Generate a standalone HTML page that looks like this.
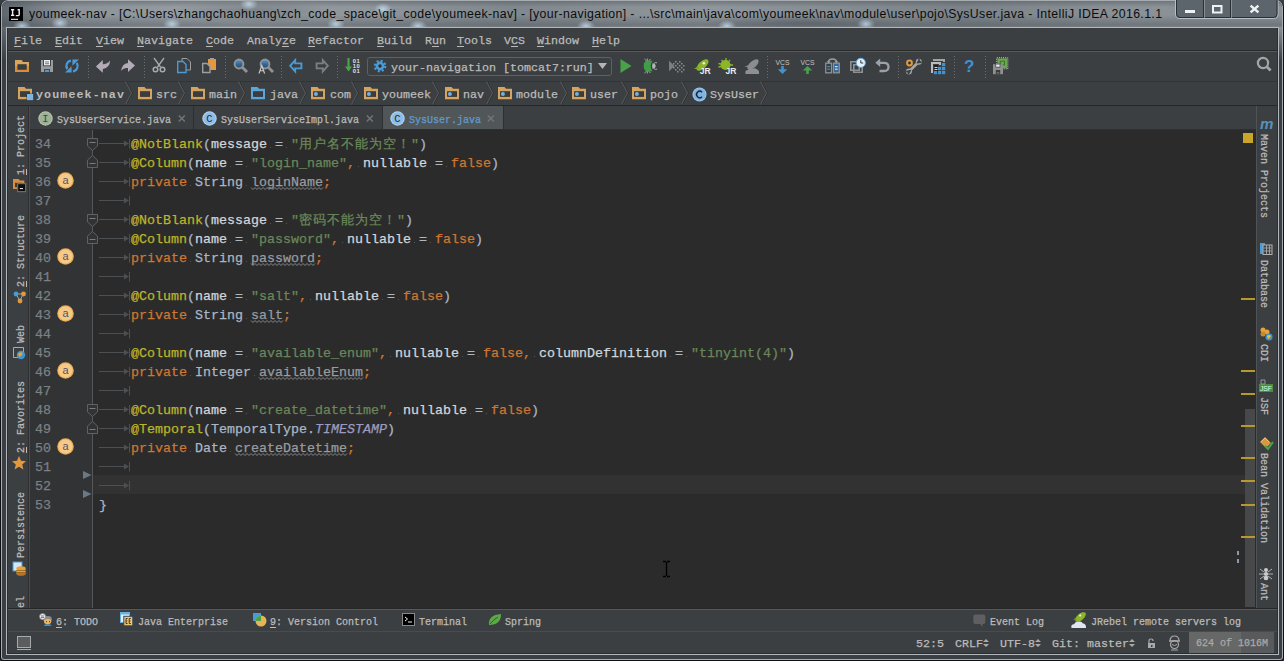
<!DOCTYPE html><html><head><meta charset="utf-8"><style>
*{margin:0;padding:0;box-sizing:border-box}
html,body{width:1284px;height:661px;overflow:hidden;background:#3a3f44}
body{position:relative;font-family:"Liberation Mono",monospace;color:#bbbbbb}
.code,.t,.ln{-webkit-text-stroke:0.25px currentColor}
.a{position:absolute}
.t{position:absolute;white-space:pre;line-height:1}
.m7{font-size:11.667px}
.m6{font-size:10px}
.m8{font-size:13.333px}
svg{position:absolute;overflow:visible}
.code{position:absolute;left:99px;font-size:13.333px;line-height:19px;white-space:pre;color:#a9b7c6}
.kw{color:#cc7832}
.an{color:#bbb529}
.st{color:#6a8759}
.nm{color:#d0d6de}
.fl{color:#979ca1}
.it{color:#9d9cc0;font-style:italic}
.cj{letter-spacing:1px}.ws{position:relative}.ws::after{content:'';position:absolute;left:3px;top:10px;width:1px;height:1px;background:#505254}
.ln{position:absolute;left:35px;width:16px;font-size:13.333px;line-height:19px;color:#7c8085;white-space:pre}
</style></head><body><div class="a" style="left:0;top:0;width:1284px;height:661px;border-radius:8px 8px 3px 3px;background:#0e1012"></div><div class="a" style="left:1px;top:0;width:1282px;height:660px;border-radius:7px 7px 3px 3px;background:#a7acb1"></div><div class="a" style="left:2px;top:1px;width:1280px;height:658px;border-radius:6px 6px 2px 2px;background:#3a3f46"></div><div class="a" style="left:2px;top:1px;width:1280px;height:60px;border-radius:6px 6px 0 0;background:
radial-gradient(ellipse 9px 6px at 20px 25px,rgba(205,230,250,.75),rgba(0,0,0,0)),
radial-gradient(ellipse 9px 6px at 58px 22px,rgba(205,230,250,.75),rgba(0,0,0,0)),
radial-gradient(ellipse 9px 6px at 170px 23px,rgba(205,230,250,.75),rgba(0,0,0,0)),
radial-gradient(ellipse 9px 6px at 247px 3px,rgba(205,230,250,.75),rgba(0,0,0,0)),
radial-gradient(ellipse 9px 6px at 334px 23px,rgba(205,230,250,.75),rgba(0,0,0,0)),
radial-gradient(ellipse 9px 6px at 381px 8px,rgba(205,230,250,.75),rgba(0,0,0,0)),
radial-gradient(ellipse 9px 6px at 416px 25px,rgba(205,230,250,.75),rgba(0,0,0,0)),
radial-gradient(ellipse 9px 6px at 584px 25px,rgba(205,230,250,.75),rgba(0,0,0,0)),
radial-gradient(ellipse 9px 6px at 725px 25px,rgba(205,230,250,.75),rgba(0,0,0,0)),
radial-gradient(ellipse 9px 6px at 864px 23px,rgba(205,230,250,.75),rgba(0,0,0,0)),
radial-gradient(ellipse 80px 12px at 250px 10px,rgba(40,45,50,.25),rgba(0,0,0,0)),
radial-gradient(ellipse 100px 8px at 800px 22px,rgba(40,45,50,.25),rgba(0,0,0,0)),
linear-gradient(180deg,rgba(60,66,72,.35) 0,rgba(0,0,0,0) 6px,rgba(0,0,0,0) 14px,rgba(60,66,72,.35) 24px,rgba(60,66,72,.2) 26px,rgba(0,0,0,0) 26px),
linear-gradient(180deg,rgba(0,0,0,0) 0,rgba(0,0,0,0) 26px,#3a3f46 60px),
linear-gradient(90deg,#5f676e 0,#8a9197 5%,#9aa1a6 18%,#80888e 40%,#8f969c 55%,#7b8389 75%,#8a9197 88%,#8a9298 100%)"></div><div class="a" style="left:6px;top:27px;width:1273px;height:628px;background:#b2b7bb"></div><svg style="left:9px;top:7px" width="14" height="14"><rect width="14" height="14" fill="#000"/>
<rect x="2" y="2" width="3.2" height="1.4" fill="#eef0f6"/><rect x="2.9" y="2" width="1.4" height="6.8" fill="#eef0f6"/><rect x="2" y="7.6" width="3.2" height="1.4" fill="#eef0f6"/>
<path d="M8.6 2.7H10.9M10.2 2V7.4Q10.2 8.6 9 8.6H6.8" stroke="#eef0f6" stroke-width="1.4" fill="none"/>
<rect x="2" y="11.8" width="7" height="1.1" fill="#eef0f6"/></svg><svg style="left:0;top:0" width="1180" height="28"><text x="29" y="17.5" font-family="Liberation Sans" font-size="12.3" fill="#0c0c0c" textLength="1133" lengthAdjust="spacing">youmeek-nav - [C:\Users\zhangchaohuang\zch_code_space\git_code\youmeek-nav] - [your-navigation] - ...\src\main\java\com\youmeek\nav\module\user\pojo\SysUser.java - IntelliJ IDEA 2016.1.1</text></svg><svg style="left:1175px;top:0" width="104" height="20">
<path d="M0.5 0 V14 q0 4.5 4.5 4.5 H98.5 q4.5 0 4.5 -4.5 V0" fill="#5c656c" stroke="#b9bfc4" stroke-width="1"/>
<path d="M1.5 0 V14 q0 3.5 3.5 3.5 H98.5 q3.5 0 3.5 -3.5 V0" fill="none" stroke="#2a2f33" stroke-width="1"/>
<path d="M28.5 0V18M55.5 0V18" stroke="#2a2f33"/>
<path d="M29.5 0V18M56.5 0V18" stroke="#a6adb2" opacity=".6"/>
<rect x="10" y="10" width="10" height="3" fill="#eef2f5"/>
<rect x="38" y="6" width="8.5" height="6.5" fill="none" stroke="#eef2f5" stroke-width="2"/>
<path d="M75.6 5.6 L83.4 12.4 M83.4 5.6 L75.6 12.4" stroke="#eef2f5" stroke-width="2.5"/>
</svg><div class="a" style="left:7px;top:28px;width:1271px;height:626px;background:#3c3f41;border-right:1px solid #2b2d2f;border-bottom:1px solid #2b2d2f"></div><div class="a" style="left:8px;top:50px;width:1269px;height:1px;background:#2a2a2a"></div><div class="a" style="left:8px;top:51px;width:1269px;height:1px;background:#57595a"></div><div class="a" style="left:8px;top:81px;width:1269px;height:1px;background:#323334"></div><div class="a" style="left:8px;top:105px;width:1269px;height:1px;background:#262626"></div><div class="t m7" style="left:14px;top:36px;color:#bbbbbb"><u>F</u>ile</div><div class="t m7" style="left:55px;top:36px;color:#bbbbbb"><u>E</u>dit</div><div class="t m7" style="left:96px;top:36px;color:#bbbbbb"><u>V</u>iew</div><div class="t m7" style="left:137px;top:36px;color:#bbbbbb"><u>N</u>avigate</div><div class="t m7" style="left:206px;top:36px;color:#bbbbbb"><u>C</u>ode</div><div class="t m7" style="left:247px;top:36px;color:#bbbbbb">Analy<u>z</u>e</div><div class="t m7" style="left:308px;top:36px;color:#bbbbbb"><u>R</u>efactor</div><div class="t m7" style="left:377px;top:36px;color:#bbbbbb"><u>B</u>uild</div><div class="t m7" style="left:425px;top:36px;color:#bbbbbb">R<u>u</u>n</div><div class="t m7" style="left:457px;top:36px;color:#bbbbbb"><u>T</u>ools</div><div class="t m7" style="left:504px;top:36px;color:#bbbbbb">V<u>C</u>S</div><div class="t m7" style="left:537px;top:36px;color:#bbbbbb"><u>W</u>indow</div><div class="t m7" style="left:592px;top:36px;color:#bbbbbb"><u>H</u>elp</div><style>u{text-decoration:underline;text-underline-offset:2px}</style><svg style="left:15px;top:60px" width="14" height="12"><defs><linearGradient id="fg" x1="0" y1="0" x2="0" y2="1"><stop offset="0" stop-color="#d6a55c"/><stop offset="0.45" stop-color="#dfa85a"/><stop offset="0.55" stop-color="#d98e3f"/><stop offset="1" stop-color="#d98c3c"/></linearGradient></defs><path d="M0 0H6.7L8 2H14V12H0Z" fill="url(#fg)"/><rect x="2.4" y="4.2" width="9.3" height="5.6" fill="#3a3d3f"/></svg><svg style="left:41px;top:60px" width="12" height="12"><rect x="0" y="0" width="12" height="12" fill="#9a9b9b"/><rect x="2.2" y="-0.4" width="7.6" height="6.6" fill="#2e3033"/><rect x="3" y="0" width="6" height="5.4" fill="#eef0f6"/><rect x="4" y="1.5" width="4" height="0.9" fill="#6a6a6a"/><rect x="4" y="3.3" width="4" height="0.9" fill="#6a6a6a"/><rect x="3.2" y="9" width="5.6" height="3" fill="#2e3033"/><rect x="3.9" y="9.7" width="4.2" height="2.3" fill="#4a9ad6"/></svg><svg style="left:65px;top:59px" width="14" height="14"><path d="M6 1.6A5.6 5.6 0 0 0 2.3 10.2M8 12.4A5.6 5.6 0 0 0 11.7 3.8" fill="none" stroke="#4a9ad6" stroke-width="2.3"/><path d="M0 13.6H6.6V7.2z M14 0.4H7.4V6.8z" fill="#4a9ad6"/></svg><svg style="left:88px;top:56px" width="1" height="23"><path d="M0.5 0V23" stroke="#6b6e70" stroke-dasharray="1 2"/></svg><svg style="left:95px;top:59px" width="16" height="15"><path d="M0.9 7.5L7.8 0.9V5.3Q12 5.5 15 1.5Q15 8.5 7.8 10V13.8Z" fill="#b4abb9"/></svg><svg style="left:120px;top:59px" width="16" height="15"><path d="M15 6.5L8 0.2V4Q2 4.5 1.2 12Q3.5 8.5 8 9V12.9Z" fill="#b4abb9"/></svg><svg style="left:144px;top:56px" width="1" height="23"><path d="M0.5 0V23" stroke="#6b6e70" stroke-dasharray="1 2"/></svg><svg style="left:152px;top:58px" width="14" height="15"><path d="M2 0L8.5 9M12 0L5.5 9" stroke="#a7a9ab" stroke-width="1.3"/><circle cx="3.5" cy="11.5" r="2.3" fill="none" stroke="#a7a9ab" stroke-width="1.5"/><circle cx="10.5" cy="11.5" r="2.3" fill="none" stroke="#a7a9ab" stroke-width="1.5"/></svg><svg style="left:177px;top:58px" width="14" height="15"><path d="M5 0.5h5l3.5 3.5v8h-8.5z" fill="#3c3f41" stroke="#9c9ea0"/><path d="M0.7 3.5h5.3l3 3v8h-8.3z" fill="#3c3f41" stroke="#4a9ad6" stroke-width="1.4"/></svg><svg style="left:202px;top:58px" width="14" height="15"><rect x="6" y="1" width="8" height="11" fill="#e3973e"/><rect x="8" y="0" width="4" height="2" fill="#9c9ea0"/><path d="M0.7 5.5h4.3l3 3v6h-7.3z" fill="#3c3f41" stroke="#9c9ea0" stroke-width="1.4"/></svg><svg style="left:225px;top:56px" width="1" height="23"><path d="M0.5 0V23" stroke="#6b6e70" stroke-dasharray="1 2"/></svg><svg style="left:233px;top:58px" width="16" height="16"><defs><linearGradient id="lens" x1="0" y1="0" x2="0" y2="1"><stop offset="0" stop-color="#5a9ad0"/><stop offset="0.5" stop-color="#2f6aa3"/><stop offset="1" stop-color="#3b4650"/></linearGradient></defs><circle cx="6" cy="6" r="4.4" fill="url(#lens)" stroke="#909293" stroke-width="2"/><path d="M9.3 9.3L14 14" stroke="#909293" stroke-width="2.8"/></svg><svg style="left:258px;top:58px" width="16" height="16"><circle cx="7" cy="6" r="4.4" fill="url(#lens)" stroke="#909293" stroke-width="2"/><path d="M10.3 9.3L15 14" stroke="#909293" stroke-width="2.8"/><path d="M1 15.5L3.8 7.5L6.6 15.5M2 12.8H5.6" stroke="#c9cacb" stroke-width="1.1" fill="none"/></svg><svg style="left:281px;top:56px" width="1" height="23"><path d="M0.5 0V23" stroke="#6b6e70" stroke-dasharray="1 2"/></svg><svg style="left:289px;top:59px" width="14" height="14"><path d="M6.2 1.2L1.2 6.8L6.2 12.4V9.4H12.4V4.4H6.2z" fill="none" stroke="#4a9ad6" stroke-width="1.9" stroke-linejoin="miter"/></svg><svg style="left:315px;top:59px" width="14" height="14"><path d="M7.8 1.2L12.8 6.8L7.8 12.4V9.4H1.6V4.4H7.8z" fill="none" stroke="#7c7f81" stroke-width="1.9"/></svg><svg style="left:337px;top:56px" width="1" height="23"><path d="M0.5 0V23" stroke="#6b6e70" stroke-dasharray="1 2"/></svg><svg style="left:345px;top:58px" width="16" height="15"><path d="M3.5 0V9" stroke="#4aa24a" stroke-width="2.2"/><path d="M0 8.5L3.5 13.5L7 8.5z" fill="#4aa24a"/><text x="7.8" y="5.2" font-family="Liberation Sans" font-weight="bold" font-size="5.8" letter-spacing="0.5" fill="#e2e2e2">01</text><text x="7.8" y="10.2" font-family="Liberation Sans" font-weight="bold" font-size="5.8" letter-spacing="0.5" fill="#e2e2e2">10</text><text x="7.8" y="15.2" font-family="Liberation Sans" font-weight="bold" font-size="5.8" letter-spacing="0.5" fill="#e2e2e2">01</text></svg><div class="a" style="left:367px;top:57px;width:245px;height:19px;border:1px solid #5e6062;border-radius:3px;background:#3c3f41"></div><svg style="left:373px;top:59px" width="14" height="14"><circle cx="7" cy="7" r="5.2" fill="none" stroke="#4a9ad6" stroke-width="2.2" stroke-dasharray="2.04 2.04"/><circle cx="7" cy="7" r="4.4" fill="#4a9ad6"/><circle cx="7" cy="7" r="1.7" fill="#2b2d2f"/></svg><div class="t m7" style="left:391px;top:63px;color:#bbbbbb">your-navigation [tomcat7:run]</div><svg style="left:598px;top:63px" width="9" height="6"><path d="M0 0H9L4.5 6z" fill="#b5b5b5"/></svg><svg style="left:620px;top:59px" width="12" height="14"><path d="M0.5 0L11.5 7L0.5 14z" fill="#49a24b"/></svg><svg style="left:643px;top:58px" width="16" height="16"><path d="M3 2.8H9.6Q7.6 5.5 7.6 8Q7.6 10.5 9.6 13.2H3L0.8 10.6V5.4z" fill="#3f9e45"/><path d="M9.6 5Q12.8 6 12.8 8Q12.8 10 9.6 11Q8.6 8 9.6 5z" fill="#b4b6b8"/><path d="M1.5 1L3.5 2.8M4.3 0.5V2.8M7.5 1L5.8 2.8M1.5 15L3.5 13.2M4.3 15.5V13.2M7.5 15L5.8 13.2M10.8 5.5Q12 4.2 14 4.8M10.8 10.5Q12 11.8 14 11.2" stroke="#a9abad" stroke-width="1" fill="none"/></svg><svg style="left:669px;top:59px" width="16" height="15"><path d="M0 1.8L5.5 7L0 12.2z" fill="#7c7e80"/><rect x="6" y="2" width="1.5" height="1.5" fill="#8a8c8e"/><rect x="10" y="2" width="1.5" height="1.5" fill="#8a8c8e"/><rect x="4" y="4" width="1.5" height="1.5" fill="#8a8c8e"/><rect x="8" y="4" width="1.5" height="1.5" fill="#8a8c8e"/><rect x="12" y="4" width="1.5" height="1.5" fill="#8a8c8e"/><rect x="6" y="6" width="1.5" height="1.5" fill="#8a8c8e"/><rect x="10" y="6" width="1.5" height="1.5" fill="#8a8c8e"/><rect x="14" y="6" width="1.5" height="1.5" fill="#8a8c8e"/><rect x="4" y="8" width="1.5" height="1.5" fill="#8a8c8e"/><rect x="8" y="8" width="1.5" height="1.5" fill="#8a8c8e"/><rect x="12" y="8" width="1.5" height="1.5" fill="#8a8c8e"/><rect x="6" y="10" width="1.5" height="1.5" fill="#8a8c8e"/><rect x="10" y="10" width="1.5" height="1.5" fill="#8a8c8e"/><rect x="14" y="10" width="1.5" height="1.5" fill="#8a8c8e"/><rect x="8" y="12" width="1.5" height="1.5" fill="#8a8c8e"/><rect x="12" y="12" width="1.5" height="1.5" fill="#8a8c8e"/></svg><svg style="left:693px;top:58px" width="17" height="17"><g transform="rotate(-42 9.5 7)"><ellipse cx="9.5" cy="7" rx="7.5" ry="3.6" fill="#8db52a"/></g><path d="M1 11L5 8L6 11z" fill="#7aa625"/><circle cx="10.8" cy="5.2" r="1.3" fill="#e6eef5"/><text x="6.8" y="16" font-family="Liberation Sans" font-weight="bold" font-size="8.5" fill="#eeeeee">JR</text></svg><svg style="left:718px;top:58px" width="17" height="17"><circle cx="7.5" cy="7" r="5" fill="#8db52a"/><path d="M8 0V3M3.5 2L5 3.8M12 2L10.5 3.8M0.5 5.5L3 6.2M0.5 9L3 8.5M12 7L15 7" stroke="#8db52a" stroke-width="1.3"/><text x="7.5" y="16" font-family="Liberation Sans" font-weight="bold" font-size="8.5" fill="#eeeeee">JR</text></svg><svg style="left:743px;top:58px" width="17" height="17"><g transform="rotate(-42 10 6.5)"><ellipse cx="10" cy="6.5" rx="7" ry="3.3" fill="#8a8c8e"/></g><path d="M1.5 9L5.5 7L6 9z" fill="#8a8c8e"/><path d="M2.5 16Q1.5 12 5 12Q7 9.5 10 10.5Q12 9.5 14 11.5Q16.5 12 16 16z" fill="#8e9092"/></svg><svg style="left:767px;top:56px" width="1" height="23"><path d="M0.5 0V23" stroke="#6b6e70" stroke-dasharray="1 2"/></svg><svg style="left:775px;top:57px" width="15" height="17"><text x="0.5" y="7.6" font-family="Liberation Sans" font-size="7.6" fill="#c4c4c4" textLength="14" lengthAdjust="spacingAndGlyphs">VCS</text><path d="M7.5 9V13" stroke="#3e93d0" stroke-width="2.6"/><path d="M2.8 12.2H12.2L7.5 17z" fill="#3e93d0"/></svg><svg style="left:800px;top:57px" width="15" height="17"><text x="0.5" y="7.6" font-family="Liberation Sans" font-size="7.6" fill="#c4c4c4" textLength="14" lengthAdjust="spacingAndGlyphs">VCS</text><path d="M7.5 13V17" stroke="#49a24b" stroke-width="2.6"/><path d="M2.8 13.6H12.2L7.5 9z" fill="#49a24b"/></svg><svg style="left:825px;top:58px" width="15" height="16"><rect x="0.7" y="5.2" width="5.8" height="9.6" fill="#393c3e" stroke="#8e9193" stroke-width="1.3"/><rect x="8.5" y="5.2" width="5.8" height="9.6" fill="#2e6aa6" stroke="#8e9193" stroke-width="1.3"/><rect x="2.3" y="8" width="2.6" height="1.2" fill="#3e93d0"/><rect x="2.3" y="10.6" width="2.6" height="1.2" fill="#3e93d0"/><rect x="10" y="8" width="2.6" height="1.2" fill="#ddd"/><rect x="10" y="10.6" width="2.6" height="1.2" fill="#ddd"/><path d="M3.6 4Q3.6 1 7.5 1Q11.4 1 11.4 4" fill="none" stroke="#9c9ea0" stroke-width="1.4"/><path d="M1.6 3.2H5.6L3.6 5.6zM9.4 3.2H13.4L11.4 5.6z" fill="#9c9ea0"/></svg><svg style="left:850px;top:58px" width="16" height="16"><path d="M0.8 3.8h8.4v8.4h-8.4z" fill="none" stroke="#8e9193" stroke-width="1.6"/><path d="M3.8 6.8h8.4v7.4h-8.4z" fill="none" stroke="#8e9193" stroke-width="1.6"/><circle cx="10.8" cy="4.8" r="4.6" fill="#e4f0fa" stroke="#5aa6e0" stroke-width="1"/><path d="M10.8 2.2V5H13.2" stroke="#333" stroke-width="1" fill="none"/></svg><svg style="left:875px;top:58px" width="15" height="15"><path d="M4 4.8H9Q13.5 4.8 13.5 9Q13.5 13 9 13H4.5" fill="none" stroke="#9ba1ab" stroke-width="2.3"/><path d="M0.3 4.8L5.2 0.5V9.1z" fill="#9ba1ab"/></svg><svg style="left:898px;top:56px" width="1" height="23"><path d="M0.5 0V23" stroke="#6b6e70" stroke-dasharray="1 2"/></svg><svg style="left:906px;top:58px" width="16" height="17"><path d="M3 13.5L12.5 4" stroke="#a5a7a9" stroke-width="2.6"/><circle cx="12.8" cy="3.8" r="3" fill="#a5a7a9"/><circle cx="2.9" cy="13.6" r="3" fill="#a5a7a9"/><path d="M13.5 1.2L12 4.5L15.5 4" stroke="#3c3f41" stroke-width="1.8" fill="none"/><path d="M2.2 16.2L3.8 13L0.2 13.6" stroke="#3c3f41" stroke-width="1.8" fill="none"/><circle cx="3.5" cy="5" r="3.4" fill="#e39a3a"/><circle cx="3.5" cy="5" r="1.4" fill="#2e3133"/></svg><svg style="left:931px;top:59px" width="15" height="16"><path d="M2 1H13V3" fill="none" stroke="#a0a5a0" stroke-width="2"/><path d="M1 14V4H9V6" fill="none" stroke="#b8bcc0" stroke-width="2"/><rect x="3" y="6" width="4" height="8" fill="#1e1f20"/><path d="M3.5 8.5h3M3.5 10.5h3" stroke="#dcdcdc"/><rect x="11" y="4" width="3.2" height="3.2" fill="#3e93d0"/><rect x="7" y="8" width="3.2" height="3.2" fill="#3e93d0"/><rect x="11" y="8" width="3.2" height="3.2" fill="#3e93d0"/><rect x="3" y="12" width="3.2" height="3.2" fill="#3e93d0"/><rect x="7" y="12" width="3.2" height="3.2" fill="#3e93d0"/><rect x="11" y="12" width="3.2" height="3.2" fill="#3e93d0"/></svg><svg style="left:954px;top:56px" width="1" height="23"><path d="M0.5 0V23" stroke="#6b6e70" stroke-dasharray="1 2"/></svg><svg style="left:964px;top:58px" width="11" height="15"><text x="0" y="14" font-family="Liberation Sans" font-weight="bold" font-size="17" fill="#3e93d0">?</text></svg><svg style="left:985px;top:56px" width="1" height="23"><path d="M0.5 0V23" stroke="#6b6e70" stroke-dasharray="1 2"/></svg><svg style="left:993px;top:57px" width="16" height="18"><rect x="3.8" y="0.8" width="11" height="11" fill="none" stroke="#d8d8d8" stroke-width="1" stroke-dasharray="1 1.1"/><rect x="4.5" y="1.5" width="9.5" height="9.5" fill="#6aa84f"/><rect x="7.3" y="4.2" width="4.2" height="3.6" fill="none" stroke="#3f7030" stroke-width="1"/><rect x="0" y="7.2" width="10" height="10" fill="#8e918e"/><rect x="2.6" y="6.8" width="4.6" height="3.6" fill="#2e3133"/><rect x="3.1" y="7.4" width="3.6" height="2.4" fill="#e8eaf2"/><rect x="2.8" y="13" width="4.4" height="4.2" fill="#3a3d3f"/><rect x="3.8" y="15.4" width="2.4" height="1" fill="#8e918e"/></svg><svg style="left:1256px;top:56px" width="16" height="16"><circle cx="7" cy="7" r="5.1" fill="none" stroke="#a3a5a6" stroke-width="2.2"/><path d="M10.6 10.6L14.6 14.6" stroke="#a3a5a6" stroke-width="2.8"/></svg><svg style="left:18px;top:87px" width="16" height="14"><path d="M0 0H6.5L8 1.8H14V12.2H0Z" fill="#d4a460"/><rect x="2.1" y="4.3" width="9.9" height="5.5" fill="#2f3234"/><rect x="2.6" y="4.8" width="8.9" height="4.5" fill="#3b3e40"/><rect x="8.6" y="6.6" width="6.8" height="6.8" fill="#2f3234"/><rect x="9" y="7" width="6.2" height="6.2" fill="#7db5e3"/></svg><div class="t m7" style="left:36px;top:90px;font-weight:bold;letter-spacing:1.1px;-webkit-text-stroke:0;color:#bbbbbb">youmeek-nav</div><svg style="left:125px;top:81px" width="8" height="24"><path d="M1.3 0.5L7.3 12L1.3 23.5" fill="none" stroke="#2c2e30" stroke-width="1"/><path d="M0.5 0.5L6.5 12L0.5 23.5" fill="none" stroke="#5a5c5e" stroke-width="1"/></svg><svg style="left:138px;top:87px" width="16" height="14"><path d="M0 0H6.5L8 1.8H14V12.2H0Z" fill="#d4a460"/><rect x="2.1" y="4.3" width="9.9" height="5.5" fill="#2f3234"/><rect x="2.6" y="4.8" width="8.9" height="4.5" fill="#3b3e40"/></svg><div class="t m7" style="left:156px;top:90px;color:#bbbbbb">src</div><svg style="left:178px;top:81px" width="8" height="24"><path d="M1.3 0.5L7.3 12L1.3 23.5" fill="none" stroke="#2c2e30" stroke-width="1"/><path d="M0.5 0.5L6.5 12L0.5 23.5" fill="none" stroke="#5a5c5e" stroke-width="1"/></svg><svg style="left:191px;top:87px" width="16" height="14"><path d="M0 0H6.5L8 1.8H14V12.2H0Z" fill="#d4a460"/><rect x="2.1" y="4.3" width="9.9" height="5.5" fill="#2f3234"/><rect x="2.6" y="4.8" width="8.9" height="4.5" fill="#3b3e40"/></svg><div class="t m7" style="left:209px;top:90px;color:#bbbbbb">main</div><svg style="left:238px;top:81px" width="8" height="24"><path d="M1.3 0.5L7.3 12L1.3 23.5" fill="none" stroke="#2c2e30" stroke-width="1"/><path d="M0.5 0.5L6.5 12L0.5 23.5" fill="none" stroke="#5a5c5e" stroke-width="1"/></svg><svg style="left:251px;top:87px" width="16" height="14"><path d="M0 0H6.5L8 1.8H14V12.2H0Z" fill="#5ea5d8"/><rect x="2.1" y="4.3" width="9.9" height="5.5" fill="#2f3234"/><rect x="2.6" y="4.8" width="8.9" height="4.5" fill="#3b3e40"/></svg><div class="t m7" style="left:270px;top:90px;color:#bbbbbb">java</div><svg style="left:299px;top:81px" width="8" height="24"><path d="M1.3 0.5L7.3 12L1.3 23.5" fill="none" stroke="#2c2e30" stroke-width="1"/><path d="M0.5 0.5L6.5 12L0.5 23.5" fill="none" stroke="#5a5c5e" stroke-width="1"/></svg><svg style="left:311px;top:87px" width="16" height="14"><path d="M0 0H6.5L8 1.8H14V12.2H0Z" fill="#d4a460"/><rect x="2.1" y="4.3" width="9.9" height="5.5" fill="#2f3234"/><rect x="2.6" y="4.8" width="8.9" height="4.5" fill="#3b3e40"/><circle cx="4.9" cy="7.1" r="2" fill="#73b0df"/></svg><div class="t m7" style="left:330px;top:90px;color:#bbbbbb">com</div><svg style="left:351px;top:81px" width="8" height="24"><path d="M1.3 0.5L7.3 12L1.3 23.5" fill="none" stroke="#2c2e30" stroke-width="1"/><path d="M0.5 0.5L6.5 12L0.5 23.5" fill="none" stroke="#5a5c5e" stroke-width="1"/></svg><svg style="left:364px;top:87px" width="16" height="14"><path d="M0 0H6.5L8 1.8H14V12.2H0Z" fill="#d4a460"/><rect x="2.1" y="4.3" width="9.9" height="5.5" fill="#2f3234"/><rect x="2.6" y="4.8" width="8.9" height="4.5" fill="#3b3e40"/><circle cx="4.9" cy="7.1" r="2" fill="#73b0df"/></svg><div class="t m7" style="left:382px;top:90px;color:#bbbbbb">youmeek</div><svg style="left:432px;top:81px" width="8" height="24"><path d="M1.3 0.5L7.3 12L1.3 23.5" fill="none" stroke="#2c2e30" stroke-width="1"/><path d="M0.5 0.5L6.5 12L0.5 23.5" fill="none" stroke="#5a5c5e" stroke-width="1"/></svg><svg style="left:445px;top:87px" width="16" height="14"><path d="M0 0H6.5L8 1.8H14V12.2H0Z" fill="#d4a460"/><rect x="2.1" y="4.3" width="9.9" height="5.5" fill="#2f3234"/><rect x="2.6" y="4.8" width="8.9" height="4.5" fill="#3b3e40"/><circle cx="4.9" cy="7.1" r="2" fill="#73b0df"/></svg><div class="t m7" style="left:463px;top:90px;color:#bbbbbb">nav</div><svg style="left:486px;top:81px" width="8" height="24"><path d="M1.3 0.5L7.3 12L1.3 23.5" fill="none" stroke="#2c2e30" stroke-width="1"/><path d="M0.5 0.5L6.5 12L0.5 23.5" fill="none" stroke="#5a5c5e" stroke-width="1"/></svg><svg style="left:498px;top:87px" width="16" height="14"><path d="M0 0H6.5L8 1.8H14V12.2H0Z" fill="#d4a460"/><rect x="2.1" y="4.3" width="9.9" height="5.5" fill="#2f3234"/><rect x="2.6" y="4.8" width="8.9" height="4.5" fill="#3b3e40"/><circle cx="4.9" cy="7.1" r="2" fill="#73b0df"/></svg><div class="t m7" style="left:516px;top:90px;color:#bbbbbb">module</div><svg style="left:560px;top:81px" width="8" height="24"><path d="M1.3 0.5L7.3 12L1.3 23.5" fill="none" stroke="#2c2e30" stroke-width="1"/><path d="M0.5 0.5L6.5 12L0.5 23.5" fill="none" stroke="#5a5c5e" stroke-width="1"/></svg><svg style="left:572px;top:87px" width="16" height="14"><path d="M0 0H6.5L8 1.8H14V12.2H0Z" fill="#d4a460"/><rect x="2.1" y="4.3" width="9.9" height="5.5" fill="#2f3234"/><rect x="2.6" y="4.8" width="8.9" height="4.5" fill="#3b3e40"/><circle cx="4.9" cy="7.1" r="2" fill="#73b0df"/></svg><div class="t m7" style="left:590px;top:90px;color:#bbbbbb">user</div><svg style="left:621px;top:81px" width="8" height="24"><path d="M1.3 0.5L7.3 12L1.3 23.5" fill="none" stroke="#2c2e30" stroke-width="1"/><path d="M0.5 0.5L6.5 12L0.5 23.5" fill="none" stroke="#5a5c5e" stroke-width="1"/></svg><svg style="left:632px;top:87px" width="16" height="14"><path d="M0 0H6.5L8 1.8H14V12.2H0Z" fill="#d4a460"/><rect x="2.1" y="4.3" width="9.9" height="5.5" fill="#2f3234"/><rect x="2.6" y="4.8" width="8.9" height="4.5" fill="#3b3e40"/><circle cx="4.9" cy="7.1" r="2" fill="#73b0df"/></svg><div class="t m7" style="left:650px;top:90px;color:#bbbbbb">pojo</div><svg style="left:681px;top:81px" width="8" height="24"><path d="M1.3 0.5L7.3 12L1.3 23.5" fill="none" stroke="#2c2e30" stroke-width="1"/><path d="M0.5 0.5L6.5 12L0.5 23.5" fill="none" stroke="#5a5c5e" stroke-width="1"/></svg><svg style="left:692px;top:87px" width="15" height="15"><circle cx="7.5" cy="7.5" r="7" fill="#a6cdf0"/><circle cx="7.5" cy="7.5" r="6.2" fill="#7fb3e3"/><path d="M10 5.2A3.2 3.2 0 1 0 10 9.8" fill="none" stroke="#222" stroke-width="1.4"/></svg><div class="t m7" style="left:710px;top:90px;color:#bbbbbb">SysUser</div><svg style="left:760px;top:81px" width="8" height="24"><path d="M1.3 0.5L7.3 12L1.3 23.5" fill="none" stroke="#2c2e30" stroke-width="1"/><path d="M0.5 0.5L6.5 12L0.5 23.5" fill="none" stroke="#5a5c5e" stroke-width="1"/></svg><div class="a" style="left:28px;top:106px;width:1px;height:503px;background:#2d2f31"></div><div class="a" style="left:29px;top:106px;width:1px;height:503px;background:#4b4e50"></div><div class="a" style="left:7px;top:28px;width:1px;height:625px;background:#2b2d2f"></div><div class="t m6" style="left:17px;top:175px;transform-origin:0 0;transform:rotate(-90deg);color:#bbbbbb"><u>1</u>: Project</div><div class="t m6" style="left:17px;top:287px;transform-origin:0 0;transform:rotate(-90deg);color:#bbbbbb"><u>2</u>: Structure</div><div class="t m6" style="left:17px;top:343px;transform-origin:0 0;transform:rotate(-90deg);color:#bbbbbb">Web</div><div class="t m6" style="left:17px;top:453px;transform-origin:0 0;transform:rotate(-90deg);color:#bbbbbb"><u>2</u>: Favorites</div><div class="t m6" style="left:17px;top:558px;transform-origin:0 0;transform:rotate(-90deg);color:#bbbbbb">Persistence</div><div class="t m6" style="left:17px;top:608px;transform-origin:0 0;transform:rotate(-90deg);color:#bbbbbb">el</div><svg style="left:13px;top:179px" width="14" height="14"><path d="M0 0H5.5L7 1.5H11.3V10H0Z" fill="#d98e3f"/><rect x="2" y="3.8" width="7.3" height="4.4" fill="#3a3d3f"/><rect x="4.6" y="4.6" width="8" height="8" fill="#0e0e0e" stroke="#6a6a6a" stroke-width="1.2"/><rect x="6.8" y="9" width="3.2" height="1.1" fill="#e0e0e0"/></svg><svg style="left:13px;top:290px" width="13" height="14"><path d="M3 4L10 4M3 4L7 11M10 4L7 11" stroke="#9aa" stroke-width="1"/><circle cx="3" cy="4" r="2.4" fill="#4a9ad6"/><circle cx="10.5" cy="4" r="2.4" fill="#e3973e"/><circle cx="7" cy="11" r="2.4" fill="#e3973e"/></svg><svg style="left:13px;top:346px" width="13" height="13"><path d="M0.5 1.5h10v10h-10z" fill="none" stroke="#aaa"/><circle cx="8" cy="9" r="4.2" fill="#3e93d0"/><path d="M5 8q2-3 5-1q-1 3-4 4z" fill="#e8a23a"/></svg><svg style="left:12px;top:456px" width="14" height="14"><path d="M7 0L9 4.8L14 5.2L10.2 8.4L11.4 13.5L7 10.8L2.6 13.5L3.8 8.4L0 5.2L5 4.8z" fill="#e3973e"/></svg><svg style="left:13px;top:562px" width="13" height="13"><rect x="0" y="0" width="9" height="9" fill="#d5e6f5" stroke="#4a9ad6"/><ellipse cx="8" cy="6" rx="4.5" ry="1.8" fill="#e8a23a"/><rect x="3.5" y="6" width="9" height="6" fill="#e8a23a"/><ellipse cx="8" cy="12" rx="4.5" ry="1.8" fill="#b97424"/><path d="M3.5 8.5h9M3.5 10.5h9" stroke="#8a5a1a" stroke-width=".7"/></svg><div class="a" style="left:1256px;top:106px;width:1px;height:503px;background:#505355"></div><div class="t m6" style="left:1268px;top:134px;transform-origin:0 0;transform:rotate(90deg);color:#bbbbbb">Maven Projects</div><div class="t m6" style="left:1268px;top:260px;transform-origin:0 0;transform:rotate(90deg);color:#bbbbbb">Database</div><div class="t m6" style="left:1268px;top:344px;transform-origin:0 0;transform:rotate(90deg);color:#bbbbbb">CDI</div><div class="t m6" style="left:1268px;top:397px;transform-origin:0 0;transform:rotate(90deg);color:#bbbbbb">JSF</div><div class="t m6" style="left:1268px;top:453px;transform-origin:0 0;transform:rotate(90deg);color:#bbbbbb">Bean Validation</div><div class="t m6" style="left:1268px;top:583px;transform-origin:0 0;transform:rotate(90deg);color:#bbbbbb">Ant</div><svg style="left:1260px;top:118px" width="15" height="12"><text x="0" y="11" font-family="Liberation Sans" font-style="italic" font-weight="bold" font-size="15.5" fill="#5890bd" textLength="13.5" lengthAdjust="spacingAndGlyphs">m</text></svg><svg style="left:1259px;top:242px" width="14" height="13"><path d="M1 1h5v11h-5z" fill="#4a9ad6"/><rect x="4" y="3" width="9" height="9.5" fill="#3c3f41" stroke="#b0b0b0" stroke-width="1"/><path d="M4.5 6h8M4.5 9h8M7.5 3v9.5M10.5 3v9.5" stroke="#b0b0b0" stroke-width=".8"/></svg><svg style="left:1259px;top:327px" width="14" height="13"><circle cx="4" cy="3" r="2.5" fill="#e8a23a"/><circle cx="8" cy="5" r="2.5" fill="#e8a23a"/><circle cx="4" cy="7" r="2.5" fill="#c88a2a"/><circle cx="10" cy="10" r="3.5" fill="#3e93d0"/><path d="M8 9q2-2 4 0q-1 2-3 3z" fill="#e8c23a"/></svg><svg style="left:1259px;top:380px" width="14" height="12"><rect x="0" y="4" width="14" height="8" fill="#4f8a3c"/><text x="1" y="11" font-family="Liberation Sans" font-size="7" fill="#dfe" textLength="12">JSF</text><path d="M2 0h4v4h-4z" fill="none" stroke="#aaa" stroke-width=".8"/></svg><svg style="left:1259px;top:437px" width="14" height="14"><path d="M1 5L6 0L12 6L7 11z" fill="#d6993f"/><path d="M2 5L6 1L10 5" fill="none" stroke="#f0c070" stroke-width="1"/><path d="M6 9L9 12L14 5" fill="none" stroke="#49a24b" stroke-width="2"/></svg><svg style="left:1259px;top:567px" width="14" height="13"><ellipse cx="7" cy="3" rx="2" ry="2" fill="#ccc"/><ellipse cx="7" cy="7" rx="2.2" ry="2" fill="#ccc"/><ellipse cx="7" cy="11" rx="2.4" ry="2.3" fill="#ccc"/><path d="M1 2L5 5M13 2L9 5M0 7H5M14 7H9M1 12L5 9M13 12L9 9" stroke="#bbb" stroke-width=".9"/></svg><div class="a" style="left:30px;top:129px;width:1226px;height:1px;background:#2d2f31"></div><div class="a" style="left:382px;top:106px;width:121px;height:23px;background:#515658"></div><div class="a" style="left:193px;top:106px;width:1px;height:23px;background:#2d2f31"></div><div class="a" style="left:382px;top:106px;width:1px;height:23px;background:#2d2f31"></div><div class="a" style="left:503px;top:106px;width:1px;height:23px;background:#2d2f31"></div><svg style="left:38px;top:110.5px" width="15" height="15"><circle cx="7.5" cy="7.5" r="7.2" fill="#b8c8b0"/><circle cx="7.5" cy="7.5" r="6.2" fill="#9eb196"/><text x="7.5" y="11" text-anchor="middle" font-family="Liberation Mono" font-size="10.5" fill="#3a4a3a">I</text></svg><svg style="left:202px;top:110.5px" width="15" height="15"><circle cx="7.5" cy="7.5" r="7.2" fill="#b4d6f3"/><circle cx="7.5" cy="7.5" r="6.2" fill="#8dbde8"/><text x="7.5" y="11" text-anchor="middle" font-family="Liberation Mono" font-size="10.5" fill="#1e2a35">C</text></svg><svg style="left:390px;top:110.5px" width="15" height="15"><circle cx="7.5" cy="7.5" r="7.2" fill="#b4d6f3"/><circle cx="7.5" cy="7.5" r="6.2" fill="#8dbde8"/><text x="7.5" y="11" text-anchor="middle" font-family="Liberation Mono" font-size="10.5" fill="#1e2a35">C</text></svg><div class="t m6" style="left:57px;top:116px;color:#bbbbbb">SysUserService.java</div><div class="t m6" style="left:221px;top:116px;color:#bbbbbb">SysUserServiceImpl.java</div><div class="t m6" style="left:409px;top:116px;color:#5f9cd0">SysUser.java</div><svg style="left:178px;top:115px" width="8" height="7"><path d="M0.8 0.5L6.8 6.5M6.8 0.5L0.8 6.5" stroke="#727577" stroke-width="1.5"/></svg><svg style="left:366px;top:115px" width="8" height="7"><path d="M0.8 0.5L6.8 6.5M6.8 0.5L0.8 6.5" stroke="#727577" stroke-width="1.5"/></svg><svg style="left:487px;top:115px" width="8" height="7"><path d="M0.8 0.5L6.8 6.5M6.8 0.5L0.8 6.5" stroke="#727577" stroke-width="1.5"/></svg><div class="a" style="left:30px;top:130px;width:63px;height:479px;background:#313335"></div><div class="a" style="left:93px;top:130px;width:1163px;height:479px;background:#2b2b2b"></div><div class="a" style="left:93px;top:475px;width:1152px;height:19px;background:#323232"></div><div class="a" style="left:92px;top:130px;width:1px;height:479px;background:#555759"></div><div class="ln" style="top:135px">34</div><div class="ln" style="top:154px">35</div><div class="ln" style="top:173px">36</div><div class="ln" style="top:192px">37</div><div class="ln" style="top:211px">38</div><div class="ln" style="top:230px">39</div><div class="ln" style="top:249px">40</div><div class="ln" style="top:268px">41</div><div class="ln" style="top:287px">42</div><div class="ln" style="top:306px">43</div><div class="ln" style="top:325px">44</div><div class="ln" style="top:344px">45</div><div class="ln" style="top:363px">46</div><div class="ln" style="top:382px">47</div><div class="ln" style="top:401px">48</div><div class="ln" style="top:420px">49</div><div class="ln" style="top:439px">50</div><div class="ln" style="top:458px">51</div><div class="ln" style="top:477px">52</div><div class="ln" style="top:496px">53</div><svg style="left:57px;top:172px" width="17" height="17"><circle cx="8.5" cy="8.5" r="8.3" fill="#e9a64b"/><circle cx="8.5" cy="8.5" r="7.2" fill="#f5c98a"/><text x="8.5" y="12" text-anchor="middle" font-family="Liberation Sans" font-size="11" fill="#555">a</text></svg><svg style="left:57px;top:248px" width="17" height="17"><circle cx="8.5" cy="8.5" r="8.3" fill="#e9a64b"/><circle cx="8.5" cy="8.5" r="7.2" fill="#f5c98a"/><text x="8.5" y="12" text-anchor="middle" font-family="Liberation Sans" font-size="11" fill="#555">a</text></svg><svg style="left:57px;top:305px" width="17" height="17"><circle cx="8.5" cy="8.5" r="8.3" fill="#e9a64b"/><circle cx="8.5" cy="8.5" r="7.2" fill="#f5c98a"/><text x="8.5" y="12" text-anchor="middle" font-family="Liberation Sans" font-size="11" fill="#555">a</text></svg><svg style="left:57px;top:362px" width="17" height="17"><circle cx="8.5" cy="8.5" r="8.3" fill="#e9a64b"/><circle cx="8.5" cy="8.5" r="7.2" fill="#f5c98a"/><text x="8.5" y="12" text-anchor="middle" font-family="Liberation Sans" font-size="11" fill="#555">a</text></svg><svg style="left:57px;top:438px" width="17" height="17"><circle cx="8.5" cy="8.5" r="8.3" fill="#e9a64b"/><circle cx="8.5" cy="8.5" r="7.2" fill="#f5c98a"/><text x="8.5" y="12" text-anchor="middle" font-family="Liberation Sans" font-size="11" fill="#555">a</text></svg><svg style="left:87px;top:138px" width="11" height="13"><path d="M0.5 0.5H10.5V8L5.5 12.5L0.5 8z" fill="#313335" stroke="#5f6264"/><path d="M2.5 4.5H8.5" stroke="#7a7d7f"/></svg><svg style="left:87px;top:155px" width="11" height="13"><path d="M0.5 12.5H10.5V5L5.5 0.5L0.5 5z" fill="#313335" stroke="#5f6264"/><path d="M2.5 8.5H8.5" stroke="#7a7d7f"/></svg><svg style="left:87px;top:214px" width="11" height="13"><path d="M0.5 0.5H10.5V8L5.5 12.5L0.5 8z" fill="#313335" stroke="#5f6264"/><path d="M2.5 4.5H8.5" stroke="#7a7d7f"/></svg><svg style="left:87px;top:231px" width="11" height="13"><path d="M0.5 12.5H10.5V5L5.5 0.5L0.5 5z" fill="#313335" stroke="#5f6264"/><path d="M2.5 8.5H8.5" stroke="#7a7d7f"/></svg><svg style="left:87px;top:404px" width="11" height="13"><path d="M0.5 0.5H10.5V8L5.5 12.5L0.5 8z" fill="#313335" stroke="#5f6264"/><path d="M2.5 4.5H8.5" stroke="#7a7d7f"/></svg><svg style="left:87px;top:421px" width="11" height="13"><path d="M0.5 12.5H10.5V5L5.5 0.5L0.5 5z" fill="#313335" stroke="#5f6264"/><path d="M2.5 8.5H8.5" stroke="#7a7d7f"/></svg><svg style="left:83px;top:471px" width="9" height="9"><path d="M0 0L8.5 4L0 8z" fill="#6a7986"/></svg><svg style="left:83px;top:490px" width="9" height="9"><path d="M0 0L8.5 4L0 8z" fill="#6a7986"/></svg><svg style="left:99px;top:139px" width="32" height="10"><path d="M0 4.5H27" stroke="#4d5052" stroke-width="1"/><path d="M25 1.5L30 4.5L25 7.5z" fill="#4d5052"/><path d="M30.5 0V9.5" stroke="#4d5052"/></svg><svg style="left:99px;top:158px" width="32" height="10"><path d="M0 4.5H27" stroke="#4d5052" stroke-width="1"/><path d="M25 1.5L30 4.5L25 7.5z" fill="#4d5052"/><path d="M30.5 0V9.5" stroke="#4d5052"/></svg><svg style="left:99px;top:177px" width="32" height="10"><path d="M0 4.5H27" stroke="#4d5052" stroke-width="1"/><path d="M25 1.5L30 4.5L25 7.5z" fill="#4d5052"/><path d="M30.5 0V9.5" stroke="#4d5052"/></svg><svg style="left:99px;top:196px" width="32" height="10"><path d="M0 4.5H27" stroke="#4d5052" stroke-width="1"/><path d="M25 1.5L30 4.5L25 7.5z" fill="#4d5052"/><path d="M30.5 0V9.5" stroke="#4d5052"/></svg><svg style="left:99px;top:215px" width="32" height="10"><path d="M0 4.5H27" stroke="#4d5052" stroke-width="1"/><path d="M25 1.5L30 4.5L25 7.5z" fill="#4d5052"/><path d="M30.5 0V9.5" stroke="#4d5052"/></svg><svg style="left:99px;top:234px" width="32" height="10"><path d="M0 4.5H27" stroke="#4d5052" stroke-width="1"/><path d="M25 1.5L30 4.5L25 7.5z" fill="#4d5052"/><path d="M30.5 0V9.5" stroke="#4d5052"/></svg><svg style="left:99px;top:253px" width="32" height="10"><path d="M0 4.5H27" stroke="#4d5052" stroke-width="1"/><path d="M25 1.5L30 4.5L25 7.5z" fill="#4d5052"/><path d="M30.5 0V9.5" stroke="#4d5052"/></svg><svg style="left:99px;top:272px" width="32" height="10"><path d="M0 4.5H27" stroke="#4d5052" stroke-width="1"/><path d="M25 1.5L30 4.5L25 7.5z" fill="#4d5052"/><path d="M30.5 0V9.5" stroke="#4d5052"/></svg><svg style="left:99px;top:291px" width="32" height="10"><path d="M0 4.5H27" stroke="#4d5052" stroke-width="1"/><path d="M25 1.5L30 4.5L25 7.5z" fill="#4d5052"/><path d="M30.5 0V9.5" stroke="#4d5052"/></svg><svg style="left:99px;top:310px" width="32" height="10"><path d="M0 4.5H27" stroke="#4d5052" stroke-width="1"/><path d="M25 1.5L30 4.5L25 7.5z" fill="#4d5052"/><path d="M30.5 0V9.5" stroke="#4d5052"/></svg><svg style="left:99px;top:329px" width="32" height="10"><path d="M0 4.5H27" stroke="#4d5052" stroke-width="1"/><path d="M25 1.5L30 4.5L25 7.5z" fill="#4d5052"/><path d="M30.5 0V9.5" stroke="#4d5052"/></svg><svg style="left:99px;top:348px" width="32" height="10"><path d="M0 4.5H27" stroke="#4d5052" stroke-width="1"/><path d="M25 1.5L30 4.5L25 7.5z" fill="#4d5052"/><path d="M30.5 0V9.5" stroke="#4d5052"/></svg><svg style="left:99px;top:367px" width="32" height="10"><path d="M0 4.5H27" stroke="#4d5052" stroke-width="1"/><path d="M25 1.5L30 4.5L25 7.5z" fill="#4d5052"/><path d="M30.5 0V9.5" stroke="#4d5052"/></svg><svg style="left:99px;top:386px" width="32" height="10"><path d="M0 4.5H27" stroke="#4d5052" stroke-width="1"/><path d="M25 1.5L30 4.5L25 7.5z" fill="#4d5052"/><path d="M30.5 0V9.5" stroke="#4d5052"/></svg><svg style="left:99px;top:405px" width="32" height="10"><path d="M0 4.5H27" stroke="#4d5052" stroke-width="1"/><path d="M25 1.5L30 4.5L25 7.5z" fill="#4d5052"/><path d="M30.5 0V9.5" stroke="#4d5052"/></svg><svg style="left:99px;top:424px" width="32" height="10"><path d="M0 4.5H27" stroke="#4d5052" stroke-width="1"/><path d="M25 1.5L30 4.5L25 7.5z" fill="#4d5052"/><path d="M30.5 0V9.5" stroke="#4d5052"/></svg><svg style="left:99px;top:443px" width="32" height="10"><path d="M0 4.5H27" stroke="#4d5052" stroke-width="1"/><path d="M25 1.5L30 4.5L25 7.5z" fill="#4d5052"/><path d="M30.5 0V9.5" stroke="#4d5052"/></svg><svg style="left:99px;top:462px" width="32" height="10"><path d="M0 4.5H27" stroke="#4d5052" stroke-width="1"/><path d="M25 1.5L30 4.5L25 7.5z" fill="#4d5052"/><path d="M30.5 0V9.5" stroke="#4d5052"/></svg><svg style="left:99px;top:481px" width="32" height="10"><path d="M0 4.5H27" stroke="#4d5052" stroke-width="1"/><path d="M25 1.5L30 4.5L25 7.5z" fill="#4d5052"/><path d="M30.5 0V9.5" stroke="#4d5052"/></svg><div class="code" style="top:135px">    <span class="an">@NotBlank</span>(<span class="nm">message</span><span class="ws"> </span>=<span class="ws"> </span><span class="st">"<span class=cj>用户名不能为空！</span>"</span>)</div><div class="code" style="top:154px">    <span class="an">@Column</span>(<span class="nm">name</span><span class="ws"> </span>=<span class="ws"> </span><span class="st">"login_name"</span><span class="kw">,</span><span class="ws"> </span><span class="nm">nullable</span><span class="ws"> </span>=<span class="ws"> </span><span class="kw">false</span>)</div><div class="code" style="top:173px">    <span class="kw">private</span><span class="ws"> </span>String<span class="ws"> </span><span class="fl">loginName</span><span class="kw">;</span></div><div class="code" style="top:192px"></div><div class="code" style="top:211px">    <span class="an">@NotBlank</span>(<span class="nm">message</span><span class="ws"> </span>=<span class="ws"> </span><span class="st">"<span class=cj>密码不能为空！</span>"</span>)</div><div class="code" style="top:230px">    <span class="an">@Column</span>(<span class="nm">name</span><span class="ws"> </span>=<span class="ws"> </span><span class="st">"password"</span><span class="kw">,</span><span class="ws"> </span><span class="nm">nullable</span><span class="ws"> </span>=<span class="ws"> </span><span class="kw">false</span>)</div><div class="code" style="top:249px">    <span class="kw">private</span><span class="ws"> </span>String<span class="ws"> </span><span class="fl">password</span><span class="kw">;</span></div><div class="code" style="top:268px"></div><div class="code" style="top:287px">    <span class="an">@Column</span>(<span class="nm">name</span><span class="ws"> </span>=<span class="ws"> </span><span class="st">"salt"</span><span class="kw">,</span><span class="ws"> </span><span class="nm">nullable</span><span class="ws"> </span>=<span class="ws"> </span><span class="kw">false</span>)</div><div class="code" style="top:306px">    <span class="kw">private</span><span class="ws"> </span>String<span class="ws"> </span><span class="fl">salt</span><span class="kw">;</span></div><div class="code" style="top:325px"></div><div class="code" style="top:344px">    <span class="an">@Column</span>(<span class="nm">name</span><span class="ws"> </span>=<span class="ws"> </span><span class="st">"available_enum"</span><span class="kw">,</span><span class="ws"> </span><span class="nm">nullable</span><span class="ws"> </span>=<span class="ws"> </span><span class="kw">false</span><span class="kw">,</span><span class="ws"> </span><span class="nm">columnDefinition</span><span class="ws"> </span>=<span class="ws"> </span><span class="st">"tinyint(4)"</span>)</div><div class="code" style="top:363px">    <span class="kw">private</span><span class="ws"> </span>Integer<span class="ws"> </span><span class="fl">availableEnum</span><span class="kw">;</span></div><div class="code" style="top:382px"></div><div class="code" style="top:401px">    <span class="an">@Column</span>(<span class="nm">name</span><span class="ws"> </span>=<span class="ws"> </span><span class="st">"create_datetime"</span><span class="kw">,</span><span class="ws"> </span><span class="nm">nullable</span><span class="ws"> </span>=<span class="ws"> </span><span class="kw">false</span>)</div><div class="code" style="top:420px">    <span class="an">@Temporal</span>(TemporalType.<span class="it">TIMESTAMP</span>)</div><div class="code" style="top:439px">    <span class="kw">private</span><span class="ws"> </span>Date<span class="ws"> </span><span class="fl">createDatetime</span><span class="kw">;</span></div><div class="code" style="top:458px"></div><div class="code" style="top:477px"></div><div class="code" style="top:496px">}</div><svg style="left:251px;top:187px" width="72" height="4"><polyline points="0,0.5 2,2.5 4,0.5 6,2.5 8,0.5 10,2.5 12,0.5 14,2.5 16,0.5 18,2.5 20,0.5 22,2.5 24,0.5 26,2.5 28,0.5 30,2.5 32,0.5 34,2.5 36,0.5 38,2.5 40,0.5 42,2.5 44,0.5 46,2.5 48,0.5 50,2.5 52,0.5 54,2.5 56,0.5 58,2.5 60,0.5 62,2.5 64,0.5 66,2.5 68,0.5 70,2.5 72,0.5" fill="none" stroke="#858789" stroke-width="1"/></svg><svg style="left:251px;top:263px" width="64" height="4"><polyline points="0,0.5 2,2.5 4,0.5 6,2.5 8,0.5 10,2.5 12,0.5 14,2.5 16,0.5 18,2.5 20,0.5 22,2.5 24,0.5 26,2.5 28,0.5 30,2.5 32,0.5 34,2.5 36,0.5 38,2.5 40,0.5 42,2.5 44,0.5 46,2.5 48,0.5 50,2.5 52,0.5 54,2.5 56,0.5 58,2.5 60,0.5 62,2.5 64,0.5" fill="none" stroke="#858789" stroke-width="1"/></svg><svg style="left:251px;top:320px" width="32" height="4"><polyline points="0,0.5 2,2.5 4,0.5 6,2.5 8,0.5 10,2.5 12,0.5 14,2.5 16,0.5 18,2.5 20,0.5 22,2.5 24,0.5 26,2.5 28,0.5 30,2.5 32,0.5" fill="none" stroke="#858789" stroke-width="1"/></svg><svg style="left:259px;top:377px" width="104" height="4"><polyline points="0,0.5 2,2.5 4,0.5 6,2.5 8,0.5 10,2.5 12,0.5 14,2.5 16,0.5 18,2.5 20,0.5 22,2.5 24,0.5 26,2.5 28,0.5 30,2.5 32,0.5 34,2.5 36,0.5 38,2.5 40,0.5 42,2.5 44,0.5 46,2.5 48,0.5 50,2.5 52,0.5 54,2.5 56,0.5 58,2.5 60,0.5 62,2.5 64,0.5 66,2.5 68,0.5 70,2.5 72,0.5 74,2.5 76,0.5 78,2.5 80,0.5 82,2.5 84,0.5 86,2.5 88,0.5 90,2.5 92,0.5 94,2.5 96,0.5 98,2.5 100,0.5 102,2.5 104,0.5" fill="none" stroke="#858789" stroke-width="1"/></svg><svg style="left:235px;top:453px" width="112" height="4"><polyline points="0,0.5 2,2.5 4,0.5 6,2.5 8,0.5 10,2.5 12,0.5 14,2.5 16,0.5 18,2.5 20,0.5 22,2.5 24,0.5 26,2.5 28,0.5 30,2.5 32,0.5 34,2.5 36,0.5 38,2.5 40,0.5 42,2.5 44,0.5 46,2.5 48,0.5 50,2.5 52,0.5 54,2.5 56,0.5 58,2.5 60,0.5 62,2.5 64,0.5 66,2.5 68,0.5 70,2.5 72,0.5 74,2.5 76,0.5 78,2.5 80,0.5 82,2.5 84,0.5 86,2.5 88,0.5 90,2.5 92,0.5 94,2.5 96,0.5 98,2.5 100,0.5 102,2.5 104,0.5 106,2.5 108,0.5 110,2.5 112,0.5" fill="none" stroke="#858789" stroke-width="1"/></svg><svg style="left:663px;top:560px" width="8" height="18"><path d="M0 1.5H3M4 1.5H7M3.5 2V16M0 16.5H3M4 16.5H7" stroke="#000" stroke-width="1.4"/></svg><div class="a" style="left:1243px;top:133px;width:10px;height:10px;background:#c9a52a"></div><div class="a" style="left:1245px;top:409px;width:10px;height:198px;background:#46484a"></div><div class="a" style="left:1241px;top:298px;width:14px;height:2px;background:#b89a2c"></div><div class="a" style="left:1241px;top:370px;width:14px;height:2px;background:#b89a2c"></div><div class="a" style="left:1241px;top:393px;width:14px;height:2px;background:#b89a2c"></div><div class="a" style="left:1241px;top:425px;width:14px;height:2px;background:#b89a2c"></div><div class="a" style="left:1241px;top:457px;width:14px;height:2px;background:#b89a2c"></div><div class="a" style="left:1241px;top:480px;width:14px;height:2px;background:#b89a2c"></div><div class="a" style="left:1241px;top:504px;width:14px;height:2px;background:#b89a2c"></div><div class="a" style="left:1241px;top:536px;width:14px;height:2px;background:#b89a2c"></div><div class="a" style="left:1237px;top:551px;width:2px;height:4px;background:#8a9aa8"></div><div class="a" style="left:1237px;top:559px;width:2px;height:4px;background:#8a9aa8"></div><div class="a" style="left:8px;top:608px;width:1269px;height:45px;background:#3c3f41"></div><div class="a" style="left:8px;top:608px;width:1269px;height:1px;background:#262626"></div><div class="a" style="left:8px;top:609px;width:1269px;height:1px;background:#59595a"></div><div class="a" style="left:8px;top:631px;width:1269px;height:1px;background:#4a4b4c"></div><div class="t m6" style="left:56px;top:618px;color:#bbbbbb"><u>6</u>: TODO</div><div class="t m6" style="left:138px;top:618px;color:#bbbbbb">Java Enterprise</div><div class="t m6" style="left:270px;top:618px;color:#bbbbbb"><u>9</u>: Version Control</div><div class="t m6" style="left:419px;top:618px;color:#bbbbbb">Terminal</div><div class="t m6" style="left:505px;top:618px;color:#bbbbbb">Spring</div><div class="t m6" style="left:990px;top:618px;color:#bbbbbb">Event Log</div><div class="t m6" style="left:1091px;top:618px;color:#bbbbbb">JRebel remote servers log</div><svg style="left:39px;top:613px" width="14" height="13"><ellipse cx="8.6" cy="6.2" rx="4.2" ry="3.2" fill="#8e8e8e"/><ellipse cx="8.6" cy="8.6" rx="3.6" ry="2.6" fill="#f0b866"/><rect x="7" y="8.2" width="1" height="1" fill="#333"/><rect x="10" y="8.2" width="1" height="1" fill="#333"/><path d="M5 13Q5 11 8.6 11Q12.2 11 12.2 13z" fill="#3e93d0"/><circle cx="3.6" cy="3.6" r="3.1" fill="#f2f2f2" stroke="#7a7a7a" stroke-width=".8"/><path d="M2 3H5.2M2 4.6H5.2" stroke="#555" stroke-width=".8"/></svg><svg style="left:120px;top:612px" width="14" height="15"><rect x="0.5" y="0.5" width="9" height="10" fill="#e8eef8" stroke="#6aaee0"/><rect x="0.5" y="0.5" width="9" height="2" fill="#6aaee0"/><rect x="3.8" y="4.3" width="9" height="9.5" fill="#f3c46e" stroke="#2d4a66" stroke-width="1"/><path d="M6 6.5H7.6M6 6.5V11.5H7.6M6 9H7.3M9.2 6.5H10.8M9.2 6.5V11.5H10.8M9.2 9H10.5" stroke="#3a2a10" stroke-width=".9" fill="none"/></svg><svg style="left:253px;top:613px" width="14" height="14"><rect x="0" y="0" width="8" height="8" fill="#4a9ad6"/><circle cx="8" cy="8" r="5.5" fill="#e8b454"/><path d="M8 8V2.5A5.5 5.5 0 0 0 2.5 8z" fill="#49a24b"/></svg><svg style="left:402px;top:613px" width="13" height="13"><rect x="0.5" y="0.5" width="12" height="12" fill="#000" stroke="#888"/><path d="M3 4L5.5 6L3 8" stroke="#eee" fill="none"/><path d="M6 9H10" stroke="#eee"/></svg><svg style="left:488px;top:613px" width="14" height="13"><path d="M1 12Q0 2 13 1Q13 12 1 12z" fill="#5aab47"/><path d="M2 11Q6 6 10 4" stroke="#3c3f41" stroke-width=".8" fill="none"/></svg><svg style="left:973px;top:614px" width="13" height="14"><rect x="0.3" y="0.5" width="12" height="9.5" rx="2" fill="#5f5f61"/><path d="M7 9.5L9.2 13L9.6 9.5z" fill="#5f5f61"/></svg><svg style="left:1070px;top:611px" width="17" height="18"><g transform="rotate(-40 10.5 6)"><ellipse cx="10.5" cy="6" rx="6.5" ry="3.2" fill="#8db52a"/></g><path d="M3 8.5L6 6.5L6.5 9z" fill="#6a9a25"/><rect x="9.3" y="3.6" width="1.8" height="1.8" fill="#f0f4f8"/><path d="M1.5 17Q0.5 13.5 4 13.2Q5 10.2 8.5 10.8Q11.5 10 13 12.5Q16.2 12.5 16 17z" fill="#dfe6f2"/></svg><svg style="left:17px;top:636px" width="14" height="14"><rect x="0.5" y="0.5" width="13" height="11" fill="#5a5c5e" stroke="#a8aaac"/><path d="M0 13.5H14" stroke="#a8aaac"/></svg><div class="t m7" style="left:916px;top:639px;color:#bbbbbb">52:5</div><div class="t m7" style="left:955px;top:639px;color:#bbbbbb">CRLF</div><div class="t m7" style="left:1000px;top:639px;color:#bbbbbb">UTF-8</div><div class="t m7" style="left:1052px;top:639px;color:#bbbbbb">Git: master</div><svg style="left:983px;top:638px" width="6" height="10"><path d="M0 4L3 1L6 4zM0 6L3 9L6 6z" fill="#a9a9a9"/></svg><svg style="left:1035px;top:638px" width="6" height="10"><path d="M0 4L3 1L6 4zM0 6L3 9L6 6z" fill="#a9a9a9"/></svg><svg style="left:1129px;top:638px" width="6" height="10"><path d="M0 4L3 1L6 4zM0 6L3 9L6 6z" fill="#a9a9a9"/></svg><svg style="left:1147px;top:638px" width="9" height="11"><path d="M2 5V3Q2 1 4 1Q6 1 6 3" fill="none" stroke="#a9a9a9" stroke-width="1.2"/><rect x="1" y="5" width="7" height="5" fill="#a9a9a9"/><rect x="4" y="7" width="1.5" height="2" fill="#3c3f41"/></svg><svg style="left:1168px;top:635px" width="13" height="16"><path d="M2 6Q2 1 6.5 1Q11 1 11 6z" fill="none" stroke="#a9a9a9" stroke-width="1.2"/><path d="M1 6H12" stroke="#a9a9a9" stroke-width="1.2"/><circle cx="6.5" cy="9.5" r="4" fill="none" stroke="#a9a9a9" stroke-width="1.2"/><path d="M4 9.5q2.5 2 5 0" stroke="#a9a9a9" fill="none"/><path d="M3 15L10 15" stroke="#a9a9a9"/></svg><div class="a" style="left:1189px;top:632px;width:85px;height:21px;background:#595a5b"></div><div class="a" style="left:1189px;top:632px;width:52px;height:21px;background:#666867"></div><div class="t m6" style="left:1196px;top:639px;color:#a9a9a9">624 of 1016M</div></body></html>
